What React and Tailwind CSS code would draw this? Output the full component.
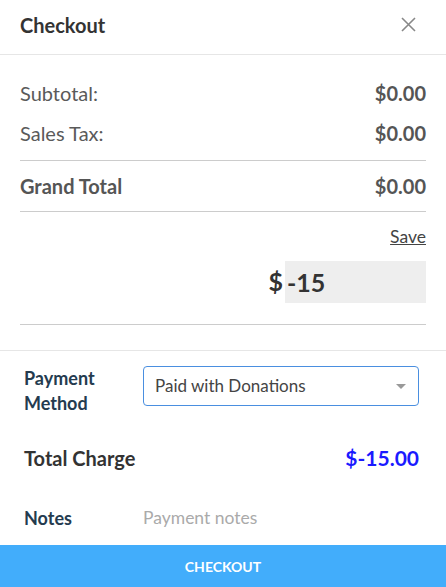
import React, { useState } from "react";

export default function App() {
  const [amount, setAmount] = useState("-15");
  const [notes, setNotes] = useState("");

  return (
    <div className="w-[446px] h-[587px] bg-white flex flex-col font-['Lato','Liberation_Sans',sans-serif] text-[#555]">
      {/* header */}
      <div className="h-[55px] flex items-center justify-between pl-5 pr-[30px] pb-[5px] border-b border-[#e6e6e6]">
        <h1 className="text-[20px] font-bold text-[#333]">Checkout</h1>
        <button className="text-[#888]">
          <svg width="15" height="15" viewBox="0 0 15 15" fill="none" stroke="currentColor" strokeWidth="1.6">
            <path d="M1 1L14 14M14 1L1 14" />
          </svg>
        </button>
      </div>

      {/* totals */}
      <div className="px-5 pt-[24px] border-b border-[#e6e6e6]">
        <div className="flex justify-between items-center h-[28px] text-[20px]">
          <span className="font-normal text-[#5a5a5a]">Subtotal:</span>
          <span className="font-bold">$0.00</span>
        </div>
        <div className="flex justify-between items-center h-[28px] mt-[12px] text-[20px]">
          <span className="font-normal text-[#5a5a5a]">Sales Tax:</span>
          <span className="font-bold">$0.00</span>
        </div>
        <div className="border-t border-[#ccc] mt-[13px] flex justify-between items-center h-[52px] text-[20px] font-bold border-b">
          <span>Grand Total</span>
          <span>$0.00</span>
        </div>
        <div className="flex flex-col items-end pt-[13px]">
          <a className="underline text-[17.5px] text-[#444] leading-[24px] cursor-pointer">Save</a>
          <div className="flex items-center mt-[12px]">
            <span className="text-[25px] font-bold text-[#333] mr-[2px]">$</span>
            <input
              value={amount}
              onChange={(e) => setAmount(e.target.value)}
              className="w-[141px] h-[42px] bg-[#eee] text-[25px] font-bold text-[#333] px-[2px] outline-none"
            />
          </div>
        </div>
        <div className="border-t border-[#ccc] mt-[21px] h-[26px]" />
      </div>

      {/* payment */}
      <div className="flex-1 pl-6 pr-[27px] pt-[15px]">
        <div className="flex">
          <div className="w-[119px] text-[18px] font-bold text-[#243b4f] leading-[25px]">
            Payment
            <br />
            Method
          </div>
          <div className="flex-1 h-[40px] border border-[#4a8fe0] rounded-[4px] flex items-center justify-between pl-[11px] pr-[12px]">
            <span className="text-[17px] text-[#444]">Paid with Donations</span>
            <span className="w-0 h-0 border-l-[5px] border-r-[5px] border-t-[5px] border-l-transparent border-r-transparent border-t-[#999]" />
          </div>
        </div>
        <div className="flex justify-between items-center mt-[29px] h-[26px]">
          <span className="text-[20px] font-bold text-[#333]">Total Charge</span>
          <span className="text-[21px] font-bold text-[#1a1aff]">$-15.00</span>
        </div>
        <div className="flex items-center mt-[35px] h-[24px]">
          <span className="w-[119px] text-[18px] font-bold text-[#243b4f]">Notes</span>
          <input
            value={notes}
            onChange={(e) => setNotes(e.target.value)}
            placeholder="Payment notes"
            className="flex-1 text-[17.5px] font-normal text-[#444] placeholder:text-[#aaa] outline-none"
          />
        </div>
      </div>

      <button className="h-[42px] bg-[#42adfb] text-white text-[14px] font-bold uppercase">
        Checkout
      </button>
    </div>
  );
}
